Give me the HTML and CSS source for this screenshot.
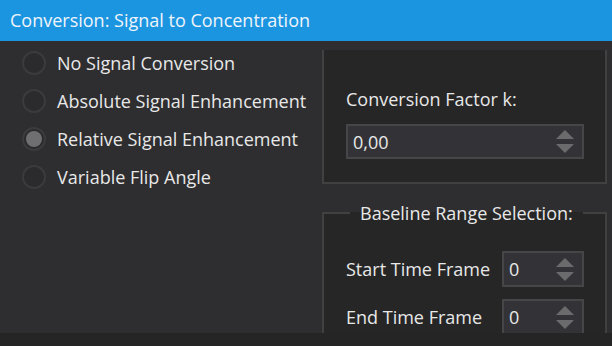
FILE: index.html
```html
<!DOCTYPE html>
<html>
<head>
<meta charset="utf-8">
<link rel="stylesheet" href="styles.css">
</head>
<body>
<div class="app">
  <div class="header">Conversion: Signal to Concentration</div>
  <div class="main">
    <div class="radios">
      <div class="radio-row"><span class="radio"></span><span>No Signal Conversion</span></div>
      <div class="radio-row"><span class="radio"></span><span>Absolute Signal Enhancement</span></div>
      <div class="radio-row"><span class="radio checked"></span><span>Relative Signal Enhancement</span></div>
      <div class="radio-row"><span class="radio"></span><span>Variable Flip Angle</span></div>
    </div>
    <div class="right">
      <div class="box box-open">
        <div class="label">Conversion Factor k:</div>
        <div class="spin spin-wide">
          <span class="val">0,00</span>
          <span class="arrows"><span class="up"></span><span class="down"></span></span>
        </div>
      </div>
      <fieldset class="box box-titled">
        <legend>Baseline Range Selection:</legend>
        <div class="field-row">
          <span class="flabel">Start Time Frame</span>
          <div class="spin spin-small">
            <span class="val">0</span>
            <span class="arrows"><span class="up"></span><span class="down"></span></span>
          </div>
        </div>
        <div class="field-row">
          <span class="flabel">End Time Frame</span>
          <div class="spin spin-small">
            <span class="val">0</span>
            <span class="arrows"><span class="up"></span><span class="down"></span></span>
          </div>
        </div>
      </fieldset>
    </div>
  </div>
  <div class="footer"></div>
</div>
</body>
</html>
```
FILE: styles.css
```css
* { box-sizing: border-box; }
html, body { margin: 0; padding: 0; }
body {
  width: 612px;
  height: 346px;
  overflow: hidden;
  background: #2e2e30;
  font-family: "Open Sans", "Noto Sans", sans-serif;
  font-size: 18px;
  color: #e8e8e8;
}
.app {
  display: flex;
  flex-direction: column;
  height: 346px;
}
.header {
  height: 41px;
  flex: none;
  background: #1c95e1;
  color: #eef4fa;
  padding-left: 10px;
  line-height: 41px;
  font-size: 18px;
}
.main {
  flex: 1;
  display: flex;
  overflow: hidden;
  min-height: 0;
}
.radios {
  width: 322px;
  flex: none;
  padding-top: 3px;
  padding-left: 22px;
}
.radio-row {
  height: 38px;
  display: flex;
  align-items: center;
  gap: 11px;
}
.radio {
  width: 24px;
  height: 24px;
  border-radius: 50%;
  border: 2px solid #3b3b3d;
  background: #2b2b2d;
  flex: none;
  display: flex;
  align-items: center;
  justify-content: center;
}
.radio.checked::after {
  content: "";
  width: 16px;
  height: 16px;
  border-radius: 50%;
  background: #6f6f71;
}
.right {
  width: 285px;
  flex: none;
  padding-top: 9px;
}
.box {
  background: #262626;
  border: 2px solid #414141;
}
.box-open {
  border-top: none;
  height: 134px;
  padding: 37px 21px 0 22px;
}
.label {
  line-height: 24px;
  margin-bottom: 13px;
}
.spin {
  display: flex;
  align-items: center;
  justify-content: space-between;
  background: #333337;
  border: 2px solid #464648;
  padding: 0 8px 0 5px;
}
.spin-wide { height: 35px; }
.spin-small { height: 36px; width: 82px; }
.arrows {
  display: flex;
  flex-direction: column;
  gap: 5px;
}
.up, .down {
  width: 0;
  height: 0;
  border-left: 9px solid transparent;
  border-right: 9px solid transparent;
}
.up { border-bottom: 9px solid #6b6b6d; }
.down { border-top: 9px solid #6b6b6d; }
.box-titled {
  margin: 17px 0 0 0;
  padding: 26px 21px 0 22px;
  min-width: 0;
}
.box-titled legend {
  padding: 0 10px;
  margin-left: 4px;
  line-height: 24px;
  color: #e8e8e8;
}
.field-row {
  display: flex;
  align-items: center;
  gap: 10px;
  margin-bottom: 12px;
}
.flabel { width: 146px; }
.footer {
  height: 13px;
  flex: none;
  background: #252525;
}
```
